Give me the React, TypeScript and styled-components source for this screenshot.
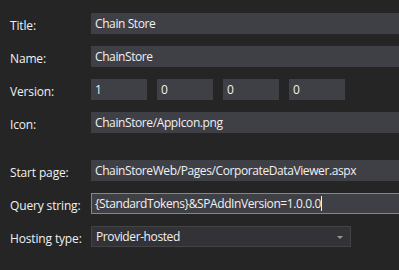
import React from "react";
import styled, { createGlobalStyle } from "styled-components";

const Global = createGlobalStyle`
  html, body { margin: 0; padding: 0; background: #252526; overflow: hidden; }
  body { width: 399px; height: 270px; }
`;

const Page = styled.div`
  width: 399px;
  height: 270px;
  overflow: hidden;
  background: #252526;
  padding-top: 13px;
  box-sizing: border-box;
  font-family: "Segoe UI", "Open Sans", "Noto Sans", sans-serif;
  font-size: 12px;
  letter-spacing: -0.4px;
  color: #f1f1f1;
`;

const Group = styled.div<{ $gapAfter?: number }>`
  display: flex;
  flex-direction: column;
  gap: 12px;
  margin-bottom: ${(p) => p.$gapAfter ?? 0}px;
`;

const Row = styled.div`
  display: grid;
  grid-template-columns: 91px 1fr;
  align-items: start;
  height: 21px;
`;

const Label = styled.div`
  padding-left: 10px;
  padding-top: 4px;
  line-height: 17px;
  white-space: nowrap;
  letter-spacing: -0.15px;
`;

const Field = styled.div<{ $focused?: boolean; $width?: number }>`
  box-sizing: border-box;
  height: 21px;
  width: ${(p) => (p.$width ? `${p.$width}px` : "340px")};
  background: #3f3f46;
  border: 1px solid ${(p) => (p.$focused ? "#3399ff" : "#3f3f46")};
  padding: 0 3px;
  line-height: 18px;
  white-space: nowrap;
  overflow: hidden;
  display: flex;
  align-items: center;
`;

const Caret = styled.span`
  display: inline-block;
  width: 1px;
  height: 15px;
  background: #f1f1f1;
`;

const VersionBoxes = styled.div`
  display: flex;
  gap: 10px;
`;

const Select = styled.div`
  box-sizing: border-box;
  height: 21px;
  width: 260px;
  background: #333337;
  border: 1px solid #434346;
  padding: 0 4px;
  line-height: 18px;
  display: flex;
  align-items: center;
  justify-content: space-between;
`;

const Arrow = styled.span`
  width: 0;
  height: 0;
  border-left: 3px solid transparent;
  border-right: 3px solid transparent;
  border-top: 3px solid #999999;
  margin-right: 3px;
  margin-top: 2px;
`;

export default function App() {
  return (
    <>
      <Global />
      <Page>
        <Group $gapAfter={27}>
          <Row>
            <Label>Title:</Label>
            <Field>Chain Store</Field>
          </Row>
          <Row>
            <Label>Name:</Label>
            <Field>ChainStore</Field>
          </Row>
          <Row>
            <Label>Version:</Label>
            <VersionBoxes>
              {["1", "0", "0", "0"].map((v, i) => (
                <Field key={i} $width={56}>
                  {v}
                </Field>
              ))}
            </VersionBoxes>
          </Row>
          <Row>
            <Label>Icon:</Label>
            <Field>ChainStore/AppIcon.png</Field>
          </Row>
        </Group>
        <Group>
          <Row>
            <Label>Start page:</Label>
            <Field>ChainStoreWeb/Pages/CorporateDataViewer.aspx</Field>
          </Row>
          <Row>
            <Label>Query string:</Label>
            <Field $focused>
              {"{StandardTokens}&SPAddInVersion=1.0.0.0"}
              <Caret />
            </Field>
          </Row>
          <Row>
            <Label>Hosting type:</Label>
            <Select>
              <span>Provider-hosted</span>
              <Arrow />
            </Select>
          </Row>
        </Group>
      </Page>
    </>
  );
}
